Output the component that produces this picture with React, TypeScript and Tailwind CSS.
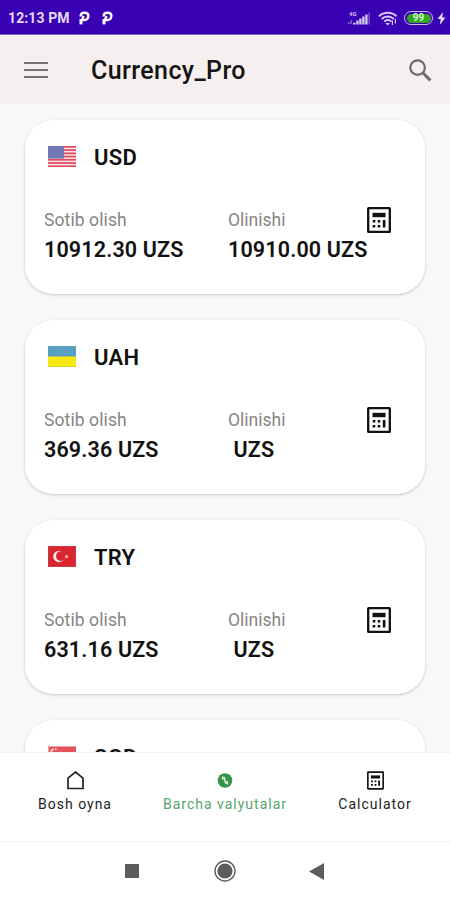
import React from 'react';

const rates = [
  { code: 'USD', buy: '10912.30', sell: '10910.00' },
  { code: 'UAH', buy: '369.36', sell: '' },
  { code: 'TRY', buy: '631.16', sell: '' },
  { code: 'SGD', buy: '', sell: '' },
];

const Flag = ({ code }: { code: string }) => (
  <svg className="mb-[4px] w-7 h-[21px]" viewBox="0 0 28 21">
    {code === 'USD' && (
      <>
        <rect width="28" height="21" fill="#f6e3e8" />
        {[0, 1, 2, 3, 4, 5, 6].map((i) => (
          <rect key={i} y={i * 3.23} width="28" height="1.7" fill="#e04a5e" />
        ))}
        <rect width="16" height="12.5" fill="#6f74b4" />
        <path d="M2 2.5h12M2 5h12M2 7.5h12M2 10h12" stroke="#8f94c8" strokeWidth=".7" strokeDasharray="1 1.2" />
      </>
    )}
    {code === 'UAH' && (
      <>
        <rect width="28" height="11" rx="1" fill="#579fc0" />
        <rect y="10.5" width="28" height="10.5" rx="1" fill="#f7e810" />
        <path d="M0 20.6h28" stroke="#d6ca35" strokeWidth=".8" />
      </>
    )}
    {code === 'TRY' && (
      <>
        <rect width="28" height="21" rx="1" fill="#dc2430" />
        <rect x=".5" y=".5" width="27" height="20" fill="none" stroke="#c83b40" />
        <circle cx="11" cy="10.5" r="5.8" fill="#fbe9e9" />
        <circle cx="12.8" cy="10.1" r="4.8" fill="#dc2430" />
        <path d="M18.6 8.2l.6 1.5 1.6.1-1.2 1 .4 1.6-1.4-.9-1.4.9.4-1.6-1.2-1 1.6-.1z" fill="#f6c0c0" />
      </>
    )}
    {code === 'SGD' && (
      <>
        <rect width="28" height="21" fill="#fff" />
        <rect width="28" height="10.5" fill="#e3555a" />
        <path d="M.5 10V.5h27" stroke="#efa0a0" fill="none" />
        <path d="M6 3.2a3.4 3.4 0 0 0-3 3.6M7 3.2h1.5" stroke="#fbd9d9" strokeWidth="1.4" fill="none" />
      </>
    )}
  </svg>
);

const CalculatorIcon = ({ className }: { className: string }) => (
  <svg className={className} viewBox="0 0 24 26" fill="none">
    <rect x="1.2" y="1.2" width="21.6" height="23.6" rx=".4" stroke="#111" strokeWidth="2.3" />
    <path d="M5.5 5.8h13v4.4h-13z" fill="#111" />
    <path d="M5.7 13h2.6v2.5H5.7zM10.7 13h2.6v2.5h-2.6zM5.7 18h2.6v2.5H5.7zM10.7 18h2.6v2.5h-2.6zM15.8 13h2.6v7.5h-2.6z" fill="#111" />
  </svg>
);

const PinIcon = () => (
  <svg className="w-[11px] h-[14px]" viewBox="0 0 11 14" fill="none" stroke="#fff">
    <path d="M2 13.4V8" strokeWidth="3" />
    <path d="M1.7 5.4V4.2C2.4.9 9.4.8 9.4 5c0 3.4-3.1 4.6-6.4 3.9l1.6-4" strokeWidth="2.4" />
  </svg>
);

const StatusBar = () => (
  <div className="flex h-[35px] shrink-0 items-center border-b border-[#7c5bcb] bg-[#3a00b3] pl-[8px] pr-[4px] pt-[2px]">
    <span className="w-[62px] whitespace-nowrap text-[14px] font-bold tracking-[0.1px] text-[#e5dcfa]">12:13 PM</span>
    <div className="ml-[9px] flex gap-[12px]">
      <PinIcon />
      <PinIcon />
    </div>
    <div className="ml-auto flex items-center">
      <svg className="w-6 h-4" viewBox="0 0 24 16">
        <text x="1" y="5.5" fontSize="6" fontWeight="700" fill="#d5c6f4">4G</text>
        <path d="M0 14v-2h1.4v2zM2.4 14v-4h1.4v4z" fill="#8d6ed8" />
        <path d="M5 14.5v-1.8h2.6v1.8zM8.2 14.5v-4h2.4v4zM11.2 14.5v-6h2.4v6zM14.2 14.5v-8h2.4v8zM17.2 14.5v-10h2.4v10z" fill="#d5c6f4" />
        <path d="M20.4 14.5v-12h1.6v12z" fill="#7350cc" />
      </svg>
      <svg className="ml-[6px] w-5 h-[15px]" viewBox="0 0 20 15" fill="none" stroke="#d5c6f4" strokeWidth="1.9">
        <path d="M1 5.2c5-4.6 12.5-4.6 17.5 0M3.6 8c3.6-3.3 8.7-3.3 12.3 0M6.2 10.6c2.2-2 5-2 7.2 0" />
        <path d="M7.4 12l2.2 2.6 2.2-2.6z" fill="#d5c6f4" stroke="none" />
        <path d="M14.4 9.5V14M17.4 12.5V8" strokeWidth="1.2" />
      </svg>
      <div className="ml-[6px] flex h-[14px] w-[29px] items-center justify-center rounded-full border-[1.5px] border-[#cbbaf1] p-[1.5px]">
        <div className="flex h-full w-full items-center justify-center rounded-full bg-[#31a91f] text-[10px] font-bold leading-none text-[#d5f8cf]">99</div>
      </div>
      <svg className="ml-[4px] w-[9px] h-[13px]" viewBox="0 0 9 13">
        <path d="M6 0L.5 7h3.2L2.8 13 8.5 5.5H5.2z" fill="#e5dcfa" />
      </svg>
    </div>
  </div>
);

const Header = () => (
  <header className="mt-[1px] flex h-[68px] shrink-0 items-center bg-[#f5efef] pl-6 pr-[18px]">
    <svg className="w-[24px] h-[18px]" viewBox="0 0 24 18">
      <path d="M0 2h24M0 9h24M0 16h24" stroke="#777373" strokeWidth="2.2" />
    </svg>
    <h1 className="ml-[43px] pt-[2px] text-[25px] font-medium tracking-[0.4px] text-[#151313]">Currency_Pro</h1>
    <svg className="ml-auto w-[23px] h-[23px]" viewBox="0 0 23 23" fill="none" stroke="#706b6b">
      <circle cx="8.6" cy="8.6" r="7.3" strokeWidth="2.2" />
      <path d="M13.8 13.8l7.6 7.6" strokeWidth="3" />
    </svg>
  </header>
);

const RateCard = ({ code, buy, sell }: { code: string; buy: string; sell: string }) => (
  <div className="flex h-[174px] shrink-0 flex-col rounded-[28px] bg-white px-[19px] pt-[24px] shadow-[0_1px_3px_rgba(0,0,0,0.2)]">
    <div className="flex h-7 items-center pl-[4px]">
      <Flag code={code} />
      <span className="ml-[18px] text-[22px] font-semibold leading-7 tracking-[0.3px] text-[#111]">{code}</span>
    </div>
    <div className="mt-[36px] flex">
      <div className="w-[184px]">
        <p className="text-[17.5px] leading-6 tracking-[0.1px] text-[#858585]">Sotib olish</p>
        <p className="mt-[4px] whitespace-nowrap text-[21.5px] font-semibold leading-7 tracking-[0.15px] text-[#111]">{buy} UZS</p>
      </div>
      <div className="w-[139px]">
        <p className="text-[17.5px] leading-6 text-[#858585]">Olinishi</p>
        <p className="mt-[4px] whitespace-pre text-[21.5px] font-semibold leading-7 tracking-[0.15px] text-[#111]">{sell} UZS</p>
      </div>
      <CalculatorIcon className="-mt-px w-6 h-[26px] shrink-0" />
    </div>
  </div>
);

const BottomTabs = () => (
  <nav className="grid h-[89px] shrink-0 grid-cols-3 border-t border-[#efefef] bg-white pt-[18px] text-[14px] leading-5 tracking-[1px]">
    <div className="flex flex-col items-center text-[#222]">
      <svg className="w-[17px] h-[19px]" viewBox="0 0 17 19" fill="none">
        <path d="M1 17.5V7.2L8.5 1 16 7.2v10.3z" stroke="#222" strokeWidth="1.7" />
      </svg>
      <span className="mt-[4px]">Bosh oyna</span>
    </div>
    <div className="flex flex-col items-center text-[#55a56b]">
      <svg className="w-4 h-[19px]" viewBox="0 0 16 19">
        <circle cx="8" cy="9.5" r="7.3" fill="#359448" />
        <path d="M5.7 5.6v3.2M5.7 6.4c2.4-.3 2 1.6 2.3 3.1.2 1.5.2 2.9 2.3 2.9M10.3 10v3.4" stroke="#dff3e2" strokeWidth="1.5" fill="none" />
      </svg>
      <span className="mt-[4px] whitespace-nowrap">Barcha valyutalar</span>
    </div>
    <div className="flex flex-col items-center text-[#222]">
      <CalculatorIcon className="w-[17px] h-[19px]" />
      <span className="mt-[4px]">Calculator</span>
    </div>
  </nav>
);

const SystemNav = () => (
  <div className="flex h-[59px] shrink-0 items-center border-t border-[#f0f0f0] bg-white pl-[125px]">
    <div className="h-[14px] w-[14px] bg-[#5c5c5c]" />
    <svg className="ml-[75px] w-[22px] h-[22px]" viewBox="0 0 22 22">
      <circle cx="11" cy="11" r="10" fill="none" stroke="#5c5c5c" strokeWidth="1.4" />
      <circle cx="11" cy="11" r="7.6" fill="#5c5c5c" />
    </svg>
    <svg className="ml-[73px] w-[15px] h-[17px]" viewBox="0 0 15 17">
      <path d="M0 8.5L15 0v17z" fill="#5c5c5c" />
    </svg>
  </div>
);

export default function App() {
  return (
    <div className="flex h-[900px] w-[450px] flex-col overflow-hidden bg-white font-[Roboto,sans-serif]">
      <StatusBar />
      <Header />
      <main className="flex min-h-0 flex-1 flex-col gap-[26px] overflow-hidden bg-[#f8f8f8] px-[25px] pt-[16px]">
        {rates.map((rate) => (
          <RateCard key={rate.code} {...rate} />
        ))}
      </main>
      <BottomTabs />
      <SystemNav />
    </div>
  );
}
